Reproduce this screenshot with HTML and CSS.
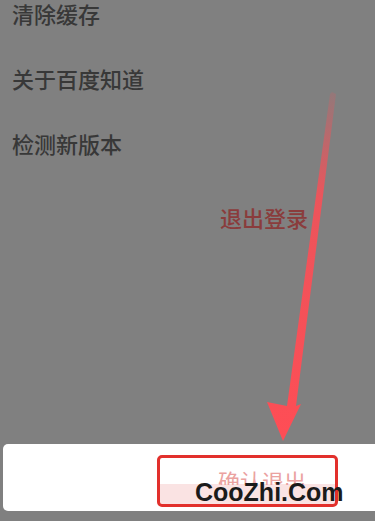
FILE: index.html
```html
<!DOCTYPE html>
<html lang="zh">

<head>
    <meta charset="UTF-8">
    <title>设置</title>
    <link rel="stylesheet" href="styles.css">
</head>

<body>
    <div class="screen">
        <!-- 设置列表 -->
        <div class="menu">
            <div class="menu-item">清除缓存</div>
            <div class="menu-item">关于百度知道</div>
            <div class="menu-item">检测新版本</div>
        </div>

        <div class="logout-title">退出登录</div>

        <!-- 底部弹层 -->
        <div class="sheet">
            <div class="confirm-btn">
                <span class="confirm-text">确认退出</span>
            </div>
        </div>

        <!-- 标注箭头 -->
        <svg class="arrow" width="375" height="521" viewBox="0 0 375 521">
            <defs>
                <linearGradient id="fade" x1="0" y1="0" x2="0" y2="1">
                    <stop offset="0" stop-color="#ff4d55" stop-opacity="0.15"/>
                    <stop offset="0.3" stop-color="#ff4d55" stop-opacity="0.85"/>
                    <stop offset="1" stop-color="#ff4d55" stop-opacity="1"/>
                </linearGradient>
            </defs>
            <path d="M332 92 L336 94 L296 406 L301 404 L283 441 L267 402 L287 406 L330 94 Z" fill="url(#fade)"/>
        </svg>

        <div class="watermark">CooZhi.Com</div>
    </div>
</body>

</html>
```

FILE: styles.css
```css
body {
    margin: 0;
    padding: 0;
    background-color: #808080;
    font-family: "Noto Sans CJK SC", sans-serif;
}

.screen {
    position: relative;
    width: 375px;
    height: 521px;
    overflow: hidden;
    display: flex;
    flex-direction: column;
}

.menu {
    padding: 0 0 0 12px;
}

.menu-item {
    font-size: 22px;
    font-weight: 500;
    line-height: 26px;
    height: 26px;
    margin-bottom: 39px;
    color: #383838; /* 列表文字 */
}

.logout-title {
    margin: 9px 0 0 220px;
    font-size: 22px;
    font-weight: 500;
    line-height: 26px;
    color: #8a3c3c;
}

.sheet {
    margin-top: auto;
    margin-left: 3px;
    margin-bottom: 10px;
    height: 67px;
    background-color: #fff;
    border-radius: 5px 0 0 5px;
    display: flex;
    align-items: flex-end;
    padding-left: 154px;
    padding-bottom: 4px;
    box-sizing: border-box;
}

.confirm-btn {
    width: 181px;
    height: 52px;
    box-sizing: border-box;
    border: 3px solid #e2302c; /* 红框 */
    border-radius: 5px;
    background: linear-gradient(#fff 0, #fff 26px, #fae3e3 26px);
    overflow: hidden;
    padding-left: 58px;
}

.confirm-text {
    display: block;
    margin-top: 9px;
    height: 18px;
    overflow: hidden;
    font-size: 22px;
    line-height: 26px;
    color: #eba2a0;
}

.arrow {
    position: absolute;
    left: 0;
    top: 0;
}

.watermark {
    position: absolute;
    left: 195px;
    top: 478px;
    font-family: "Liberation Sans", Arial, sans-serif;
    font-weight: bold;
    font-size: 25px;
    color: #1b1b1b;
}
```
